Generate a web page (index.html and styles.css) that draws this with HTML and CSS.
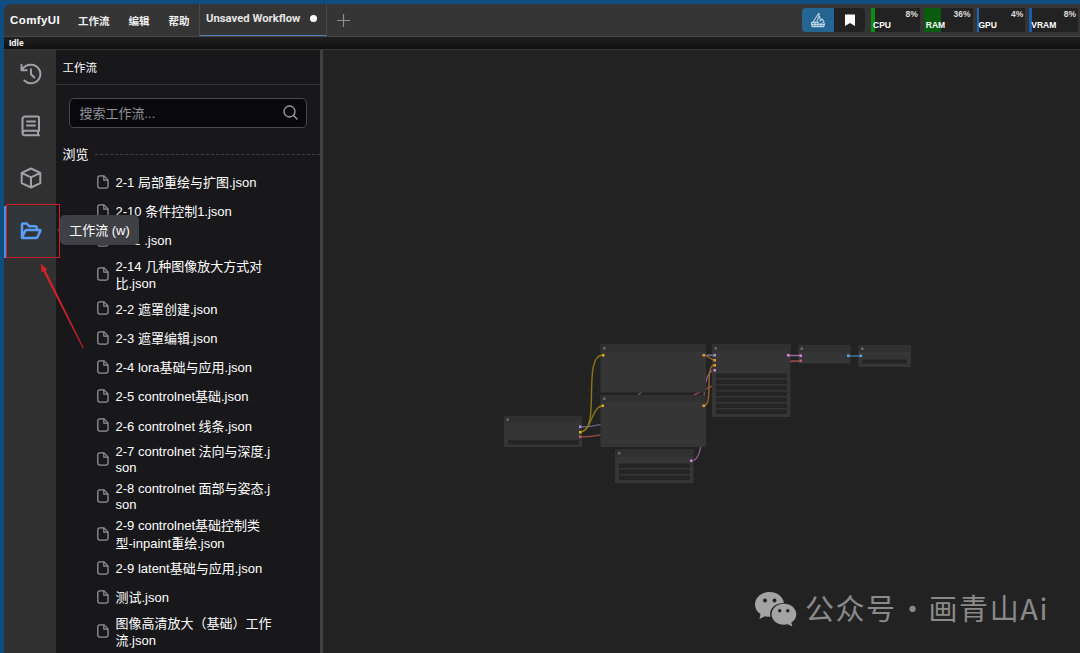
FILE: index.html
```html
<!DOCTYPE html>
<html lang="zh-CN">
<head>
    <meta charset="UTF-8">
    <meta name="viewport" content="width=device-width, initial-scale=1.0">
    <title>ComfyUI</title>
    <link rel="stylesheet" href="styles.css">
</head>
<body>
    <svg class="defs" width="0" height="0">
        <symbol id="file" viewBox="0 0 12 14">
            <path d="M2.6 .9H7l4 4v6.4a1.8 1.8 0 0 1-1.8 1.8H2.6A1.8 1.8 0 0 1 .8 11.3V2.7A1.8 1.8 0 0 1 2.6.9z" fill="none" stroke="currentColor" stroke-width="1.3"/>
            <path d="M6.8 1v4.1H11" fill="none" stroke="currentColor" stroke-width="1.2"/>
        </symbol>
    </svg>

    <div class="app">
        <header class="topbar">
            <div class="logo">ComfyUI</div>
            <nav class="menu">
                <span>工作流</span>
                <span>编辑</span>
                <span>帮助</span>
            </nav>
            <div class="tab"><span>Unsaved Workflow</span><i class="dot"></i></div>
            <svg class="plus" width="13" height="13" viewBox="0 0 13 13"><path d="M6.5 0v13M0 6.5h13" stroke="#8f8f96" stroke-width="1.2"/></svg>
            <div class="tools">
                <div class="tool tool-blue">
                    <svg width="16" height="16" viewBox="0 0 16 16" fill="none" stroke="#b9d3e4" stroke-width="1.1">
                        <path d="M9 1L3 10h6M9 1v3.500L7 9M9.500 4l1 5M1 10.500h7M10 9.500l2-2.500 2 2.500-1.500 1.500"/>
                        <path d="M1 12.500h14M2 14.700h12M1.500 11l1 4M5 11v4M8 11v4M11 11v4M14.500 11l-1 4" stroke-width="1.300"/>
                    </svg>
                </div>
                <div class="tool">
                    <svg width="10" height="12" viewBox="0 0 10 12"><path d="M0 .5h10V12L5 9l-5 3z" fill="#fff"/></svg>
                </div>
            </div>
            <div class="monitors">
                <div class="monitor"><i class="fill cpu"></i><b>CPU</b><em>8%</em></div>
                <div class="monitor"><i class="fill ram"></i><b>RAM</b><em>36%</em></div>
                <div class="monitor"><i class="fill gpu"></i><b>GPU</b><em>4%</em></div>
                <div class="monitor"><i class="fill vram"></i><b>VRAM</b><em>8%</em></div>
            </div>
        </header>
        <div class="status">Idle</div>

        <main class="main">
            <aside class="rail">
                <div class="rail-item">
                    <svg width="22" height="22" viewBox="0 0 22 22" fill="none" stroke="currentColor" stroke-width="2" stroke-linecap="round" stroke-linejoin="round">
                        <path d="M1.500 1.800v5.400h5.200M2 6.800C3.800 3.400 7 1.700 11 1.700a9.300 9.300 0 1 1-6.600 15.800"/>
                        <path d="M11 6.200v5l3.300 3.300"/>
                    </svg>
                </div>
                <div class="rail-item">
                    <svg width="20" height="22" viewBox="0 0 20 22" fill="none" stroke="currentColor" stroke-width="2" stroke-linecap="round" stroke-linejoin="round">
                        <path d="M18 16V2.800A1.300 1.300 0 0 0 16.700 1.500H4A2.500 2.500 0 0 0 1.500 4v13.700A2.600 2.600 0 0 0 4 20.300h14M18 15.800H4a2.300 2.300 0 0 0-2.300 2.300M17 16v4"/>
                        <path d="M6 6.500h8M6 10.500h8"/>
                    </svg>
                </div>
                <div class="rail-item">
                    <svg width="22" height="22" viewBox="0 0 22 22" fill="none" stroke="currentColor" stroke-width="2" stroke-linejoin="round">
                        <path d="M11 1.500l9.300 4.300v10.400L11 20.500l-9.300-4.300V5.800zM1.700 5.800L11 10.300l9.300-4.500M11 10.300v10.200"/>
                    </svg>
                </div>
                <div class="rail-item active">
                    <svg width="22" height="18" viewBox="0 0 22 18" fill="none" stroke="currentColor" stroke-width="2.500" stroke-linejoin="round">
                        <path d="M2 14.500V2.700A1.200 1.200 0 0 1 3.200 1.500h3.600l2.500 2.800h5.900a1.500 1.500 0 0 1 1.500 1.500v2M2 15.500l3.200-6.600a1.500 1.500 0 0 1 1.300-.9h13.200q1 0 .6 1l-2.800 6.100a1.500 1.500 0 0 1-1.400.9H2.700q-1 0-.7-1z"/>
                    </svg>
                </div>
            </aside>

            <section class="panel">
                <div class="panel-title">工作流</div>
                <div class="search">
                    <span>搜索工作流...</span>
                    <svg width="15" height="15" viewBox="0 0 15 15" fill="none" stroke="#a1a1aa" stroke-width="1.300" stroke-linecap="round"><circle cx="6.500" cy="6.500" r="5.500"/><path d="M10.500 10.500l3.500 3.500"/></svg>
                </div>
                <div class="divider"><span>浏览</span></div>
                <ul class="files">
                    <li><svg><use href="#file"/></svg><span>2-1 局部重绘与扩图.json</span></li>
                    <li><svg><use href="#file"/></svg><span>2-10 条件控制1.json</span></li>
                    <li><svg><use href="#file"/></svg><span>2-11 .json</span></li>
                    <li class="tall"><svg><use href="#file"/></svg><span>2-14 几种图像放大方式对比.json</span></li>
                    <li><svg><use href="#file"/></svg><span>2-2 遮罩创建.json</span></li>
                    <li><svg><use href="#file"/></svg><span>2-3 遮罩编辑.json</span></li>
                    <li><svg><use href="#file"/></svg><span>2-4 lora基础与应用.json</span></li>
                    <li><svg><use href="#file"/></svg><span>2-5 controlnet基础.json</span></li>
                    <li><svg><use href="#file"/></svg><span>2-6 controlnet 线条.json</span></li>
                    <li class="medium"><svg><use href="#file"/></svg><span>2-7 controlnet 法向与深度.json</span></li>
                    <li class="medium"><svg><use href="#file"/></svg><span>2-8 controlnet 面部与姿态.json</span></li>
                    <li class="tall"><svg><use href="#file"/></svg><span>2-9 controlnet基础控制类型-inpaint重绘.json</span></li>
                    <li><svg><use href="#file"/></svg><span>2-9 latent基础与应用.json</span></li>
                    <li><svg><use href="#file"/></svg><span>测试.json</span></li>
                    <li class="tall"><svg><use href="#file"/></svg><span>图像高清放大（基础）工作流.json</span></li>
                </ul>
            </section>

            <section class="canvas">
                <!-- viewBox starts at the canvas corner, so units are window pixels -->
                <svg class="graph" viewBox="323 50 757 603" width="757" height="603">
                    <g fill="none" stroke-width="1.300">
                        <path d="M580 427C650 427 630 355 715 355" stroke="#6e6585"/>
                        <path d="M580 437C650 437 720 361 801 361" stroke="#9a4b4b"/>
                        <path d="M691 461C712 461 694 370 715 370" stroke="#8a5888"/>
                    </g>
                    <g fill="#353535">
                        <rect x="504" y="416" width="78" height="31"/>
                        <rect x="600.500" y="344" width="105.500" height="48.500"/>
                        <rect x="600.500" y="395" width="105.500" height="52"/>
                        <rect x="615" y="449.500" width="78.500" height="33.500"/>
                        <rect x="712" y="344" width="78.500" height="73"/>
                        <rect x="798" y="345" width="52.500" height="18.500"/>
                        <rect x="858.500" y="345" width="52.500" height="22"/>
                    </g>
                    <g fill="#303030">
                        <rect x="504" y="416" width="78" height="7"/>
                        <rect x="600.500" y="344" width="105.500" height="8"/>
                        <rect x="600.500" y="395" width="105.500" height="7"/>
                        <rect x="615" y="449.500" width="78.500" height="7"/>
                        <rect x="712" y="344" width="78.500" height="7"/>
                        <rect x="798" y="345" width="52.500" height="7"/>
                        <rect x="858.500" y="345" width="52.500" height="7"/>
                    </g>
                    <g fill="#242424">
                        <rect x="508" y="440" width="71" height="4.500"/>
                        <rect x="619" y="463.500" width="71" height="4.500"/>
                        <rect x="619" y="469.500" width="71" height="4.500"/>
                        <rect x="619" y="475.500" width="71" height="4.500"/>
                        <rect x="716" y="373.500" width="71" height="4.500"/>
                        <rect x="716" y="379.500" width="71" height="4.500"/>
                        <rect x="716" y="385.500" width="71" height="4.500"/>
                        <rect x="716" y="391.500" width="71" height="4.500"/>
                        <rect x="716" y="397.500" width="71" height="4.500"/>
                        <rect x="716" y="403.500" width="71" height="4.500"/>
                        <rect x="716" y="409.500" width="71" height="4.500"/>
                        <rect x="862" y="359.500" width="45" height="4"/>
                    </g>
                    <g fill="#686868">
                        <rect x="506.500" y="418.500" width="2.500" height="2.500"/>
                        <rect x="603" y="347" width="2.500" height="2.500"/>
                        <rect x="603" y="397.500" width="2.500" height="2.500"/>
                        <rect x="618" y="452" width="2.500" height="2.500"/>
                        <rect x="714.500" y="347" width="2.500" height="2.500"/>
                        <rect x="800.500" y="347.500" width="2.500" height="2.500"/>
                        <rect x="861" y="347.500" width="2.500" height="2.500"/>
                    </g>
                    <g fill="none" stroke-width="1.400">
                        <path d="M580 432C602 432 581 355 603 355" stroke="#8c7718"/>
                        <path d="M580 432C592 432 591 406 603 406" stroke="#8c7718"/>
                        <path d="M703.500 355C708 355 710 360 714.500 360M703.500 406C714 406 704 365 714.500 365" stroke="#906628"/>
                        <path d="M706 355.500h8" stroke="#6e6585"/>
                        <path d="M788 355.500h13" stroke="#a066a0"/>
                        <path d="M790.500 361.500l10-.5" stroke="#8d4848"/>
                        <path d="M848 356h13" stroke="#3f76a4"/>
                    </g>
                    <g fill="#d9af1c">
                        <rect x="579" y="431" width="2.500" height="2.500"/>
                        <rect x="602" y="354" width="2.500" height="2.500"/>
                        <rect x="601.500" y="404.500" width="2.500" height="2.500"/>
                    </g>
                    <g fill="#e59a37">
                        <rect x="702.500" y="354" width="2.500" height="2.500"/>
                        <rect x="702.500" y="404.500" width="2.500" height="2.500"/>
                        <rect x="713.500" y="359" width="2.500" height="2.500"/>
                        <rect x="713.500" y="364" width="2.500" height="2.500"/>
                    </g>
                    <g fill="#a394cc">
                        <rect x="579" y="425.500" width="2.500" height="2.500"/>
                        <rect x="713.500" y="354" width="2.500" height="2.500"/>
                    </g>
                    <g fill="#d988d9">
                        <rect x="690" y="459.500" width="2.500" height="2.500"/>
                        <rect x="713.500" y="369" width="2.500" height="2.500"/>
                        <rect x="787" y="354" width="2.500" height="2.500"/>
                        <rect x="799.500" y="354.500" width="2.500" height="2.500"/>
                    </g>
                    <g fill="#cc6060">
                        <rect x="579" y="435.500" width="2.500" height="2.500"/>
                        <rect x="799.500" y="359.500" width="2.500" height="2.500"/>
                    </g>
                    <g fill="#5ea8df">
                        <rect x="847" y="354.500" width="2.500" height="2.500"/>
                        <rect x="859.500" y="354.500" width="2.500" height="2.500"/>
                    </g>
                </svg>
            </section>
        </main>

        <div class="tooltip">工作流 (w)</div>
        <div class="highlight"></div>
        <svg class="arrow" width="46" height="88" viewBox="0 0 46 88"><path d="M1 1l.8 8 1.700-.8L42.800 85l.6-.3L5.300 7.300l1.700-.9z" fill="#d8232a" stroke="#d8232a" stroke-width=".4"/></svg>
        <div class="watermark">
            <svg width="42" height="35" viewBox="0 0 42 35">
                <path d="M14.500 0C6.500 0 0 5.500 0 12.500c0 4 2.100 7.300 5.500 9.600L4.500 27l5.500-2.800c1.500.4 3 .6 4.500.6h1C13.500 17 20 11 29 11c-1-6.500-7-11-14.500-11z" fill="#a3a3a3"/>
                <path d="M29 11.700c-7 0-12.500 4.700-12.500 10.500S22 32.700 29 32.700c1.300 0 2.600-.2 3.800-.5l4.500 2.300-1-4c3-1.900 5-4.900 5-8.300 0-5.800-5.300-10.500-12.300-10.500z" fill="#a3a3a3"/>
                <g fill="#222"><circle cx="10" cy="8.500" r="1.900"/><circle cx="19.500" cy="8.500" r="1.900"/><circle cx="24.700" cy="18.700" r="1.700"/><circle cx="32.800" cy="18.700" r="1.700"/></g>
            </svg>
            <span class="wm-label">公众号</span><span class="wm-dot">·</span><span class="wm-name">画青山Ai</span>
        </div>
    </div>
</body>
</html>
```
FILE: styles.css
```css
* {
    box-sizing: border-box;
}
body {
    margin: 0;
    background: #0f4c7f;
    color: #fff;
    font-family: "Liberation Sans", "Noto Sans CJK SC", sans-serif;
    font-size: 13px;
    overflow: hidden;
}
.defs {
    position: absolute;
}
.app {
    position: relative;
    display: flex;
    flex-direction: column;
    width: 1080px;
    height: 653px;
    padding: 4px 0 0 4px;
}

/* top bar */
.topbar {
    display: flex;
    align-items: center;
    height: 33px;
    flex: none;
    background: #353535;
    border-bottom: 1px solid #464646;
    border-top-left-radius: 7px;
    font-size: 11px;
    font-weight: bold;
    white-space: nowrap;
}
.logo {
    width: 74px;
    padding-left: 6px;
    font-size: 11.5px;
    letter-spacing: 0.4px;
}
.menu {
    display: flex;
    gap: 19px;
    width: 121px;
    color: #eee;
    font-size: 10.5px;
}
.tab {
    display: flex;
    align-items: center;
    justify-content: space-between;
    width: 128px;
    height: 32px;
    padding: 0 9px 2px 6px;
    border: 1px solid #4a4a4a;
    border-width: 0 1px 1px;
    border-bottom-color: #4c81bd;
    color: #e4e4e4;
    font-family: Roboto, "Liberation Sans", sans-serif;
    font-size: 11.3px;
}
.dot {
    width: 7px;
    height: 7px;
    border-radius: 50%;
    background: #fff;
}
.plus {
    margin-left: 10px;
}
.tools {
    display: flex;
    margin-left: auto;
    height: 24px;
    border-radius: 4px;
    overflow: hidden;
}
.tool {
    display: flex;
    align-items: center;
    justify-content: center;
    width: 31px;
    background: #222;
}
.tool-blue {
    width: 32px;
    background: #246592;
}
.monitors {
    display: flex;
    gap: 4px;
    margin: 0 2px 0 6px;
}
.monitor {
    position: relative;
    display: flex;
    flex-direction: column-reverse;
    justify-content: space-between;
    width: 48.75px;
    height: 24px;
    padding: 1px 2px 2px;
    background: #222;
    font-size: 8.5px;
    line-height: 10px;
}
.monitor b,
.monitor em {
    position: relative;
    font-style: normal;
}
.monitor em {
    align-self: flex-end;
    color: #ddd;
}
.fill {
    position: absolute;
    left: 0;
    top: 0;
    bottom: 0;
}
.cpu {
    width: 4px;
    background: #0b8d13;
}
.ram {
    width: 17px;
    background: #075c0e;
}
.gpu {
    width: 2px;
    background: #1b68ba;
}
.vram {
    width: 3px;
    background: #165db0;
}
.status {
    height: 13px;
    flex: none;
    padding-left: 5px;
    background: linear-gradient(#202020, #101010);
    border-bottom: 1px solid #343434;
    font-size: 8.5px;
    font-weight: bold;
    line-height: 12px;
}

/* body */
.main {
    display: flex;
    flex: 1;
    min-height: 0;
}
.rail {
    width: 52px;
    flex: none;
    background: #303030;
    color: #a1a1aa;
}
.rail-item {
    display: flex;
    align-items: center;
    justify-content: center;
    height: 52px;
    padding: 0 0 4px 1px;
}
.rail-item.active {
    background: #30363a;
    border-left: 2px solid #4b92dd;
    padding: 0 0 3px;
    color: #5a9ef5;
}
.panel {
    width: 267px;
    flex: none;
    background: #18181b;
    border-right: 3px solid #3f3f46;
    overflow: hidden;
}
.panel-title {
    height: 35px;
    border-bottom: 1px solid #34343a;
    padding-left: 6.5px;
    font-size: 11.5px;
    line-height: 36px;
}
.search {
    display: flex;
    align-items: center;
    justify-content: space-between;
    height: 30px;
    margin: 13px 13px 0;
    padding: 0 8px 1px 9.5px;
    border: 1px solid #48484f;
    border-radius: 5px;
    background: #09090b;
    color: #92929a;
}
.divider {
    display: flex;
    align-items: center;
    gap: 6px;
    height: 20px;
    margin-top: 16px;
    padding-left: 6.5px;
}
.divider span {
    margin-top: -2px;
}
.divider::after {
    content: "";
    flex: 1;
    border-top: 1px dashed #3f3f46;
}
.files {
    margin: 4px 0 0;
    padding: 0 0 0 41px;
    list-style: none;
}
.files li {
    display: flex;
    align-items: center;
    gap: 6.5px;
    height: 29.25px;
    line-height: 17.5px;
}
.files svg {
    width: 12px;
    height: 14px;
    flex: none;
    margin-top: -2px;
    color: #92929b;
}
.files span {
    width: 157px;
    word-break: break-all;
}
.files .medium {
    height: 37px;
    line-height: 16px;
}
.files .tall {
    height: 39px;
}
.canvas {
    flex: 1;
    background: #222;
}
.graph {
    display: block;
}

/* overlays */
.tooltip {
    position: absolute;
    left: 60px;
    top: 215px;
    width: 79px;
    height: 30px;
    border-radius: 5px;
    background: #3f3f46;
    box-shadow: 0 1px 4px rgba(0, 0, 0, 0.3);
    line-height: 31px;
    text-align: center;
}
.tooltip::before {
    content: "";
    position: absolute;
    left: -3px;
    top: 12px;
    border: 3px solid transparent;
    border-left: 0;
    border-right-color: #3f3f46;
}
.highlight {
    position: absolute;
    left: 6px;
    top: 204px;
    width: 54px;
    height: 54px;
    border: 1px solid #c92027;
}
.arrow {
    position: absolute;
    left: 40px;
    top: 263px;
}
.watermark {
    position: absolute;
    left: 755px;
    top: 592px;
    display: flex;
    align-items: center;
    height: 35px;
    color: #8a8a8a;
    font-family: "Noto Sans CJK SC", sans-serif;
    font-size: 29px;
    white-space: nowrap;
}
.watermark span {
    margin-top: -5px;
}
.wm-label {
    margin-left: 8px;
    letter-spacing: 1.5px;
}
.wm-dot {
    width: 32px;
    text-align: center;
}
.wm-name {
    letter-spacing: 1.6px;
}
```
